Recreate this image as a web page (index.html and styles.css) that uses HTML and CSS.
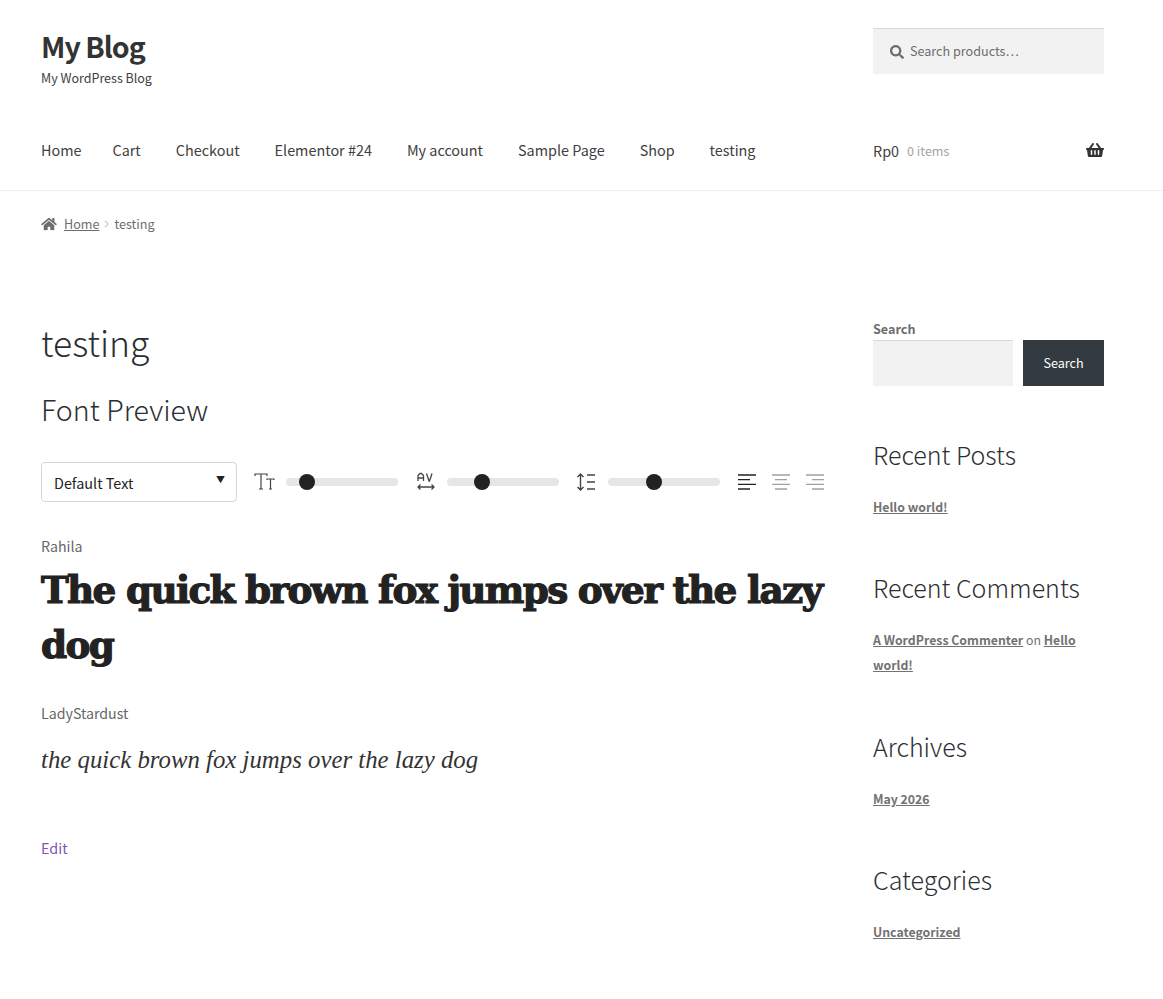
FILE: index.html
```html
<!DOCTYPE html>
<html lang="en">
<head>
    <meta charset="UTF-8">
    <meta name="viewport" content="width=device-width, initial-scale=1.0">
    <title>testing - My Blog</title>
    <link rel="stylesheet" href="styles.css">
</head>
<body>
    <header class="site-header">
        <div class="header-top">
            <div class="branding">
                <a class="site-title" href="#">My Blog</a>
                <p class="site-description">My WordPress Blog</p>
            </div>
            <form class="product-search">
                <svg class="search-icon" viewBox="0 0 512 512" aria-hidden="true"><path d="M505 442.7L405.3 343c-4.5-4.5-10.6-7-17-7H372c27.6-35.3 44-79.7 44-128C416 93.1 322.9 0 208 0S0 93.1 0 208s93.1 208 208 208c48.3 0 92.7-16.4 128-44v16.3c0 6.4 2.5 12.5 7 17l99.7 99.7c9.4 9.4 24.6 9.4 33.9 0l28.3-28.3c9.4-9.4 9.4-24.6.1-34zM208 336c-70.7 0-128-57.2-128-128 0-70.7 57.2-128 128-128 70.7 0 128 57.2 128 128 0 70.7-57.2 128-128 128z"/></svg>
                <input type="search" placeholder="Search products…" aria-label="Search products">
            </form>
        </div>
        <div class="header-nav">
            <nav class="main-nav">
                <a href="#">Home</a>
                <a href="#">Cart</a>
                <a href="#">Checkout</a>
                <a href="#">Elementor #24</a>
                <a href="#">My account</a>
                <a href="#">Sample Page</a>
                <a href="#">Shop</a>
                <a href="#">testing</a>
            </nav>
            <a class="cart-link" href="#">
                <span class="cart-amount">Rp0</span>
                <span class="cart-count">0 items</span>
                <svg class="cart-icon" viewBox="0 0 576 512" aria-hidden="true"><path d="M576 216v16c0 13.255-10.745 24-24 24h-8l-26.113 182.788C514.509 462.435 494.257 480 470.37 480H105.63c-23.887 0-44.139-17.565-47.518-41.212L32 256h-8c-13.255 0-24-10.745-24-24v-16c0-13.255 10.745-24 24-24h67.341l106.78-146.821c10.395-14.292 30.407-17.453 44.701-7.058 14.293 10.395 17.453 30.408 7.058 44.701L170.477 192h235.046L326.12 82.821c-10.395-14.292-7.234-34.306 7.059-44.701 14.291-10.395 34.306-7.235 44.701 7.058L484.659 192H552c13.255 0 24 10.745 24 24zM312 392V280c0-13.255-10.745-24-24-24s-24 10.745-24 24v112c0 13.255 10.745 24 24 24s24-10.745 24-24zm112 0V280c0-13.255-10.745-24-24-24s-24 10.745-24 24v112c0 13.255 10.745 24 24 24s24-10.745 24-24zm-224 0V280c0-13.255-10.745-24-24-24s-24 10.745-24 24v112c0 13.255 10.745 24 24 24s24-10.745 24-24z"/></svg>
            </a>
        </div>
    </header>

    <div class="breadcrumb">
        <svg class="home-icon" viewBox="0 0 576 512" aria-hidden="true"><path d="M280.37 148.26L96 300.11V464a16 16 0 0 0 16 16l112.06-.29a16 16 0 0 0 15.92-16V368a16 16 0 0 1 16-16h64a16 16 0 0 1 16 16v95.64a16 16 0 0 0 16 16.05L464 480a16 16 0 0 0 16-16V300L295.67 148.26a12.19 12.19 0 0 0-15.3 0zM571.6 251.47L488 182.56V44.05a12 12 0 0 0-12-12h-56a12 12 0 0 0-12 12v72.61L318.47 43a48 48 0 0 0-61 0L4.34 251.47a12 12 0 0 0-1.6 16.9l25.5 31A12 12 0 0 0 45.15 301l235.22-193.74a12.19 12.19 0 0 1 15.3 0L530.9 301a12 12 0 0 0 16.9-1.6l25.5-31a12 12 0 0 0-1.7-16.93z"/></svg>
        <a href="#">Home</a>
        <svg class="crumb-sep" viewBox="0 0 6 10" aria-hidden="true"><path d="M1 1l4 4-4 4" fill="none" stroke="currentColor" stroke-width="2"/></svg>
        <span>testing</span>
    </div>

    <div class="page-columns">
        <main class="content">
            <h1 class="page-title">testing</h1>
            <h2 class="preview-title">Font Preview</h2>

            <div class="preview-controls">
                <div class="select-wrap">
                    <select aria-label="Preview text">
                        <option>Default Text</option>
                    </select>
                </div>
                <div class="control">
                    <svg class="control-icon" viewBox="0 0 22 20" aria-hidden="true"><path d="M1 4V2h12v2M7 2v15M5 17h4M13 8V7h7v1M16.500 7v10M15 17h3" fill="none" stroke="currentColor" stroke-width="1.200"/></svg>
                    <input class="slider" type="range" min="0" max="100" value="14" aria-label="Font size">
                </div>
                <div class="control">
                    <svg class="control-icon" viewBox="0 0 22 20" aria-hidden="true"><path d="M3 9V3.500L5 1.500h1.500L8.500 3.500V9M3 6h5.500M11.500 1.500l2.500 7.500h.5l2.500-7.500M3 15h16M5.500 12.500L3 15l2.500 2.500M16.500 12.500L19 15l-2.500 2.500" fill="none" stroke="currentColor" stroke-width="1.300"/></svg>
                    <input class="slider" type="range" min="0" max="100" value="28" aria-label="Letter spacing">
                </div>
                <div class="control">
                    <svg class="control-icon" viewBox="0 0 22 20" aria-hidden="true"><path d="M4.500 2v16M1.500 5l3-3 3 3M1.500 15l3 3 3-3M11 3h8M11 10h8M11 17h8" fill="none" stroke="currentColor" stroke-width="1.400"/></svg>
                    <input class="slider" type="range" min="0" max="100" value="40" aria-label="Line height">
                </div>
                <div class="align-buttons">
                    <svg class="align-icon is-active" viewBox="0 0 18 16" aria-hidden="true"><path d="M0 1h18M0 5.670h12M0 10.330h18M0 15h12" fill="none" stroke="currentColor" stroke-width="1.300"/></svg>
                    <svg class="align-icon" viewBox="0 0 18 16" aria-hidden="true"><path d="M0 1h18M3 5.670h12M0 10.330h18M3 15h12" fill="none" stroke="currentColor" stroke-width="1.300"/></svg>
                    <svg class="align-icon" viewBox="0 0 18 16" aria-hidden="true"><path d="M0 1h18M6 5.670h12M0 10.330h18M6 15h12" fill="none" stroke="currentColor" stroke-width="1.300"/></svg>
                </div>
            </div>

            <div class="font-sample">
                <p class="font-name">Rahila</p>
                <p class="sample-rahila">The quick brown fox jumps over the lazy dog</p>
            </div>
            <div class="font-sample">
                <p class="font-name">LadyStardust</p>
                <p class="sample-stardust">the quick brown fox jumps over the lazy dog</p>
            </div>

            <a class="edit-link" href="#">Edit</a>
        </main>

        <aside class="sidebar">
            <section class="widget widget-search">
                <label class="search-label" for="sidebar-search">Search</label>
                <div class="search-row">
                    <input id="sidebar-search" type="search">
                    <button type="button">Search</button>
                </div>
            </section>
            <section class="widget">
                <h2 class="widget-title">Recent Posts</h2>
                <p class="widget-text"><a href="#">Hello world!</a></p>
            </section>
            <section class="widget widget-comments">
                <h2 class="widget-title">Recent Comments</h2>
                <p class="widget-text"><a href="#">A WordPress Commenter</a> on <a href="#">Hello world!</a></p>
            </section>
            <section class="widget">
                <h2 class="widget-title">Archives</h2>
                <p class="widget-text"><a href="#">May 2026</a></p>
            </section>
            <section class="widget">
                <h2 class="widget-title">Categories</h2>
                <p class="widget-text"><a href="#">Uncategorized</a></p>
            </section>
        </aside>
    </div>
</body>
</html>
```

FILE: styles.css
```css
* {
    box-sizing: border-box;
}
body {
    margin: 0;
    font-family: "Noto Sans CJK JP", "Noto Sans", sans-serif;
    font-size: 14.4px;
    color: #43454b;
    background: #ffffff;
}
a {
    color: inherit;
    text-decoration: none;
}
p,
h1,
h2 {
    margin: 0;
}

/* header */
.site-header {
    padding: 27px 59px 0 41px;
    border-bottom: 1px solid #eeeeee;
    height: 191px;
}
.header-top {
    display: flex;
    justify-content: space-between;
    height: 96px;
}
.site-title {
    display: block;
    font-size: 28.6px;
    line-height: 38px;
    font-weight: 700;
    letter-spacing: -1px;
    color: #333333;
}
.site-description {
    margin-top: 3px;
    font-size: 12.5px;
    line-height: 20px;
    color: #404040;
}
.product-search {
    width: 231px;
    height: 46px;
    margin-top: 1px;
    display: flex;
    align-items: center;
    gap: 6px;
    padding-left: 17px;
    background: #f2f2f2;
    border-top: 1px solid #d9d9d9;
}
.search-icon {
    width: 14px;
    height: 14px;
    fill: #6d6d6d;
    flex: none;
}
.product-search input {
    flex: 1;
    min-width: 0;
    border: 0;
    padding: 0 0 2px;
    background: transparent;
    font: inherit;
    font-size: 12.6px;
    color: #6d6d6d;
    outline: none;
}
.product-search input::placeholder {
    color: #6d6d6d;
    opacity: 1;
}
.header-nav {
    display: flex;
    justify-content: space-between;
    align-items: center;
    height: 56px;
    padding-bottom: 2px;
}
.main-nav {
    display: flex;
    gap: 35px;
    line-height: 24px;
    color: #404040;
}
.main-nav a:first-child {
    margin-right: -4px;
}
.cart-link {
    width: 231px;
    display: flex;
    align-items: center;
    color: #404040;
}
.cart-count {
    margin-left: 8px;
    font-size: 12.6px;
    color: #a3a3a3;
}
.cart-icon {
    width: 18px;
    height: 16px;
    margin-left: auto;
    fill: #333333;
}

/* breadcrumb */
.breadcrumb {
    display: flex;
    align-items: center;
    padding: 23px 41px 0;
    font-size: 12.6px;
    line-height: 20px;
    color: #6d6d6d;
}
.breadcrumb a {
    text-decoration: underline;
}
.home-icon {
    width: 16px;
    height: 14px;
    margin-right: 7px;
    fill: #6d6d6d;
}
.crumb-sep {
    width: 5px;
    height: 8px;
    margin: 0 5px;
    color: #d4d4d4;
}

/* page columns */
.page-columns {
    display: flex;
    justify-content: space-between;
    padding: 0 59px 0 41px;
    margin-top: 85px;
}
.content {
    width: 785px;
}
.page-title {
    margin-top: -2px;
    font-size: 35.5px;
    line-height: 50px;
    font-weight: 200;
    color: #2b2f33;
}
.preview-title {
    margin-top: 24px;
    font-size: 28.6px;
    line-height: 36px;
    font-weight: 200;
    color: #2b2f33;
}
.preview-controls {
    display: flex;
    align-items: center;
    margin-top: 35px;
    height: 40px;
}
.select-wrap {
    position: relative;
    width: 196px;
    height: 40px;
    margin-right: 17px;
}
.select-wrap::after {
    content: '▼';
    position: absolute;
    top: 11px;
    right: 12px;
    font-size: 9px;
    line-height: 14px;
    color: #222222;
    pointer-events: none;
}
.select-wrap select {
    appearance: none;
    width: 100%;
    height: 100%;
    padding: 0 12px;
    background: #ffffff;
    border: 1px solid #d6d6d6;
    border-radius: 4px;
    font: inherit;
    color: #222222;
}
.control {
    display: flex;
    align-items: center;
    gap: 10px;
    margin-right: 17px;
    color: #444444;
}
.control-icon {
    width: 22px;
    height: 20px;
    flex: none;
}
.slider {
    appearance: none;
    width: 112px;
    height: 8px;
    margin: 0;
    border-radius: 4px;
    background: #e6e6e6;
}
.slider::-webkit-slider-thumb {
    appearance: none;
    width: 16px;
    height: 16px;
    border-radius: 50%;
    background: #222222;
}
.align-buttons {
    display: flex;
    gap: 16px;
    margin-left: 1px;
    color: #a0a0a0;
}
.align-icon {
    width: 18px;
    height: 16px;
}
.align-icon.is-active {
    color: #222222;
}
.font-sample {
    margin-top: 34px;
}
.font-name {
    line-height: 20px;
    font-size: 14.2px;
    color: #666666;
}
.sample-rahila {
    margin-top: 7px;
    font-family: "DejaVu Serif", serif;
    font-size: 37.4px;
    line-height: 55px;
    font-weight: 700;
    letter-spacing: -1.7px;
    color: #222222;
    -webkit-text-stroke: 1.2px #222222;
}
.sample-stardust {
    margin-top: 21px;
    font-family: "Liberation Serif", serif;
    font-style: italic;
    font-size: 24.8px;
    line-height: 32px;
    color: #333333;
}
.font-sample + .font-sample {
    margin-top: 30px;
}
.edit-link {
    display: block;
    margin-top: 60px;
    line-height: 24px;
    color: #7f54b3;
}

/* sidebar */
.sidebar {
    width: 231px;
}
.widget {
    margin-bottom: 50px;
}
.widget-search {
    margin-bottom: 51px;
}
.widget-comments {
    margin-bottom: 51px;
}
.search-label {
    display: block;
    padding-bottom: 1px;
    font-size: 12.6px;
    line-height: 20px;
    font-weight: 700;
    color: #6d6d6d;
}
.search-row {
    display: flex;
    gap: 10px;
}
.search-row input {
    flex: 1;
    min-width: 0;
    height: 46px;
    border: 0;
    border-top: 1px solid #d9d9d9;
    background: #f2f2f2;
}
.search-row button {
    width: 81px;
    height: 46px;
    padding: 0 0 2px;
    border: 0;
    background: #333a40;
    color: #ffffff;
    font: inherit;
    font-size: 12.6px;
}
.widget-title {
    font-size: 25px;
    line-height: 34px;
    font-weight: 200;
    color: #2b2f33;
}
.widget-text {
    margin-top: 24px;
    font-size: 12.3px;
    line-height: 25px;
    color: #727272;
}
.widget-text a {
    font-weight: 700;
    text-decoration: underline;
}
```
